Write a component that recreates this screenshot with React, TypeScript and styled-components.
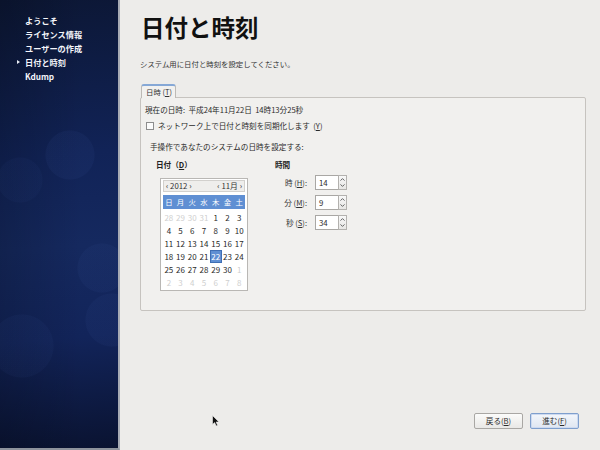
import React from 'react';
import styled, { createGlobalStyle } from 'styled-components';

/* GLOBAL */
const GlobalStyle = createGlobalStyle`
  html, body {
    margin: 0;
    padding: 0;
  }
  body {
    width: 600px;
    height: 450px;
    overflow: hidden;
    font-family: "Noto Sans CJK JP", "Noto Sans", sans-serif;
    color: #1e1e1e;
  }
`;

/* STYLES */
const Screen = styled.div`
  position: relative;
  display: flex;
  width: 600px;
  height: 450px;
  background: #edecea;
`;

const Sidebar = styled.nav`
  flex: none;
  width: 120px;
  box-sizing: border-box;
  padding-top: 13px;
  border-right: 2px solid #a7abb4;
  border-bottom: 2px solid #8e939c;
  background:
    radial-gradient(circle at 70px 155px, rgba(70, 100, 175, 0.08) 0 24px, transparent 25px),
    radial-gradient(circle at 20px 180px, rgba(70, 100, 175, 0.05) 0 22px, transparent 23px),
    radial-gradient(circle at 102px 268px, rgba(70, 100, 175, 0.07) 0 24px, transparent 25px),
    radial-gradient(circle at 112px 320px, rgba(70, 100, 175, 0.07) 0 26px, transparent 27px),
    radial-gradient(circle at 22px 346px, rgba(70, 100, 175, 0.06) 0 31px, transparent 32px),
    linear-gradient(90deg, rgba(0, 0, 0, 0.18) 0%, rgba(0, 0, 0, 0) 70%),
    linear-gradient(175deg, #0c1735 0%, #112357 35%, #15295f 55%, #12245a 75%, #0a1331 100%);
`;

const NavItem = styled.div<{ $active?: boolean }>`
  position: relative;
  padding-left: 25px;
  height: 14px;
  line-height: 14px;
  font-size: 8.2px;
  font-weight: bold;
  color: #f4f6fb;
  white-space: nowrap;
  &::before {
    content: '';
    display: ${(p) => (p.$active ? 'block' : 'none')};
    position: absolute;
    left: 17px;
    top: 5px;
    border-left: 3px solid #e8ecf5;
    border-top: 2.5px solid transparent;
    border-bottom: 2.5px solid transparent;
  }
`;

const Main = styled.main`
  flex: 1;
  display: flex;
  flex-direction: column;
  padding: 15px 14px 0 20px;
`;

const Title = styled.h1`
  margin: 0 0 0 1px;
  font-size: 23.5px;
  line-height: 24px;
  font-weight: bold;
  color: #111;
`;

const Subtitle = styled.p`
  margin: 20px 0 0 0;
  font-size: 7.4px;
  line-height: 10px;
  color: #333;
`;

const TabStrip = styled.div`
  display: flex;
  margin: 15px 0 0 1px;
  position: relative;
  z-index: 1;
`;

const Tab = styled.div`
  width: 35px;
  height: 14px;
  box-sizing: border-box;
  padding-left: 4px;
  border: 1px solid #bdbab6;
  border-top: 2px solid #86a8d6;
  border-bottom: none;
  border-radius: 3px 3px 0 0;
  background: #f2f1ef;
  font-size: 7.4px;
  line-height: 12px;
  color: #333;
`;

const Panel = styled.section`
  height: 214px;
  box-sizing: border-box;
  margin-top: -1px;
  padding: 7px 4px 0 4px;
  border: 1px solid #c6c3bf;
  border-radius: 2px;
  background: #f1f0ee;
  font-size: 7.6px;
  line-height: 10px;
  color: #2a2a2a;
`;

const Line = styled.div<{ $top?: number; $indent?: number }>`
  margin-top: ${(p) => p.$top ?? 0}px;
  padding-left: ${(p) => p.$indent ?? 0}px;
  white-space: pre;
`;

const CheckRow = styled.label`
  display: flex;
  align-items: center;
  gap: 4px;
  margin-top: 6px;
  padding-left: 1px;
  white-space: pre;
`;

const CheckBox = styled.span`
  width: 8px;
  height: 8px;
  box-sizing: border-box;
  border: 1px solid #8d8d8d;
  background: #fbfbfb;
`;

const Columns = styled.div`
  display: flex;
  margin-top: 8px;
  padding-left: 11px;
`;

const DateColumn = styled.div`
  width: 119px;
`;

const TimeColumn = styled.div`
  display: flex;
  flex-direction: column;
`;

const GroupLabel = styled.div`
  font-weight: bold;
  color: #222;
  white-space: pre;
`;

const Calendar = styled.div`
  width: 88px;
  box-sizing: border-box;
  margin: 8px 0 0 4px;
  padding: 1px 2px 1px 2px;
  border: 1px solid #b9b7b4;
  background: #ffffff;
  font-size: 8px;
`;

const CalHeader = styled.div`
  display: flex;
  justify-content: space-between;
  height: 12px;
  box-sizing: border-box;
  padding: 0 2px;
  border: 1px solid #d2d0cd;
  background: #efeeec;
  line-height: 10px;
  font-size: 7.8px;
  color: #333;
`;

const DayHead = styled.div`
  display: grid;
  grid-template-columns: repeat(7, 1fr);
  height: 14px;
  margin-top: 3px;
  background: #5f8fd3;
  color: #ffffff;
  font-size: 7.4px;
  line-height: 14px;
  text-align: center;
`;

const DayGrid = styled.div`
  display: grid;
  grid-template-columns: repeat(7, 1fr);
  grid-auto-rows: 13px;
  margin-top: 2px;
`;

const Day = styled.div<{ $muted?: boolean; $selected?: boolean }>`
  box-sizing: border-box;
  text-align: center;
  color: ${(p) => (p.$selected ? '#ffffff' : p.$muted ? '#cfcfcf' : '#2a2a2a')};
  background: ${(p) => (p.$selected ? '#5f8fd3' : 'transparent')};
  border: ${(p) => (p.$selected ? '1px solid #3f6eb3' : 'none')};
  line-height: ${(p) => (p.$selected ? '11px' : '13px')};
`;

const TimeRow = styled.div`
  display: flex;
  align-items: center;
  height: 15px;
  margin-top: 5px;
  &:first-of-type {
    margin-top: 7px;
  }
`;

const TimeLabel = styled.span`
  width: 32px;
  margin-right: 8px;
  text-align: right;
  white-space: pre;
  color: #333;
`;

const SpinInput = styled.div`
  width: 23px;
  height: 15px;
  box-sizing: border-box;
  padding-left: 3px;
  border: 1px solid #a9a7a4;
  border-right: none;
  background: #ffffff;
  line-height: 13px;
  font-size: 7.8px;
`;

const SpinButtons = styled.div`
  display: flex;
  flex-direction: column;
  width: 9px;
  height: 15px;
  box-sizing: border-box;
  border: 1px solid #b3b1ae;
  background: linear-gradient(#f8f8f8, #e7e6e4);
`;

const SpinHalf = styled.span`
  flex: 1;
  display: flex;
  align-items: center;
  justify-content: center;
`;

const Spacer = styled.div`
  flex: 1;
`;

const ButtonRow = styled.div`
  display: flex;
  justify-content: flex-end;
  gap: 7px;
  padding: 0 7px 21px 0;
`;

const Button = styled.button<{ $primary?: boolean }>`
  width: 49px;
  height: 16px;
  padding: 0;
  border: 1px solid ${(p) => (p.$primary ? '#7f9fcd' : '#a9a7a4')};
  border-radius: 2px;
  background: ${(p) =>
    p.$primary ? 'linear-gradient(#f3f6fb, #dfe6f1)' : 'linear-gradient(#fbfbfa, #e9e8e6)'};
  box-shadow: ${(p) => (p.$primary ? 'inset 0 0 0 1px #cddaf0' : 'none')};
  font-family: "Noto Sans CJK JP", "Noto Sans", sans-serif;
  font-size: 7.6px;
  line-height: 14px;
  color: #2a2a2a;
`;

const Cursor = styled.svg`
  position: absolute;
  left: 212px;
  top: 415px;
`;

/* DATA */
const navItems = ['ようこそ', 'ライセンス情報', 'ユーザーの作成', '日付と時刻', 'Kdump'];
const dayNames = ['日', '月', '火', '水', '木', '金', '土'];

type Cell = { n: number; muted?: boolean };
const cells: Cell[] = [
  ...[28, 29, 30, 31].map((n) => ({ n, muted: true })),
  ...Array.from({ length: 30 }, (_, i) => ({ n: i + 1 })),
  ...[1, 2, 3, 4, 5, 6, 7, 8].map((n) => ({ n, muted: true })),
];

const times = [
  { kanji: '時', key: 'H', value: '14' },
  { kanji: '分', key: 'M', value: '9' },
  { kanji: '秒', key: 'S', value: '34' },
];

function Arrows() {
  return (
    <SpinButtons>
      <SpinHalf>
        <svg width="5" height="3" viewBox="0 0 5 3">
          <path d="M0.5 2.6 L2.5 0.6 L4.5 2.6" fill="none" stroke="#555" strokeWidth="0.9" />
        </svg>
      </SpinHalf>
      <SpinHalf>
        <svg width="5" height="3" viewBox="0 0 5 3">
          <path d="M0.5 0.4 L2.5 2.4 L4.5 0.4" fill="none" stroke="#555" strokeWidth="0.9" />
        </svg>
      </SpinHalf>
    </SpinButtons>
  );
}

/* COMPONENT */
export default function App() {
  return (
    <>
      <GlobalStyle />
      <Screen>
        <Sidebar>
          {navItems.map((item) => (
            <NavItem key={item} $active={item === '日付と時刻'}>
              {item}
            </NavItem>
          ))}
        </Sidebar>

        <Main>
          <Title>日付と時刻</Title>
          <Subtitle>システム用に日付と時刻を設定してください。</Subtitle>

          <TabStrip>
            <Tab>
              日時 (<u>T</u>)
            </Tab>
          </TabStrip>

          <Panel>
            <Line>現在の日時:  平成24年11月22日  14時13分25秒</Line>
            <CheckRow>
              <CheckBox />
              <span>
                ネットワーク上で日付と時刻を同期化します  (<u>Y</u>)
              </span>
            </CheckRow>
            <Line $top={11} $indent={5}>
              手操作であなたのシステムの日時を設定する:
            </Line>

            <Columns>
              <DateColumn>
                <GroupLabel>
                  日付（<u>D</u>）
                </GroupLabel>
                <Calendar>
                  <CalHeader>
                    <span>‹ 2012 ›</span>
                    <span>‹ 11月 ›</span>
                  </CalHeader>
                  <DayHead>
                    {dayNames.map((d) => (
                      <span key={d}>{d}</span>
                    ))}
                  </DayHead>
                  <DayGrid>
                    {cells.map((c, i) => (
                      <Day key={i} $muted={c.muted} $selected={!c.muted && c.n === 22}>
                        {c.n}
                      </Day>
                    ))}
                  </DayGrid>
                </Calendar>
              </DateColumn>

              <TimeColumn>
                <GroupLabel>時間</GroupLabel>
                {times.map((t) => (
                  <TimeRow key={t.key}>
                    <TimeLabel>
                      {t.kanji} (<u>{t.key}</u>):
                    </TimeLabel>
                    <SpinInput>{t.value}</SpinInput>
                    <Arrows />
                  </TimeRow>
                ))}
              </TimeColumn>
            </Columns>
          </Panel>

          <Spacer />

          <ButtonRow>
            <Button>
              戻る(<u>B</u>)
            </Button>
            <Button $primary>
              進む(<u>F</u>)
            </Button>
          </ButtonRow>
        </Main>

        <Cursor width="8" height="12" viewBox="0 0 8 12">
          <path d="M0.5 0.5 L0.5 9.5 L2.6 7.6 L4.2 11 L5.6 10.3 L4.1 7 L7 7 Z" fill="#111" stroke="#eee" strokeWidth="0.6" />
        </Cursor>
      </Screen>
    </>
  );
}
